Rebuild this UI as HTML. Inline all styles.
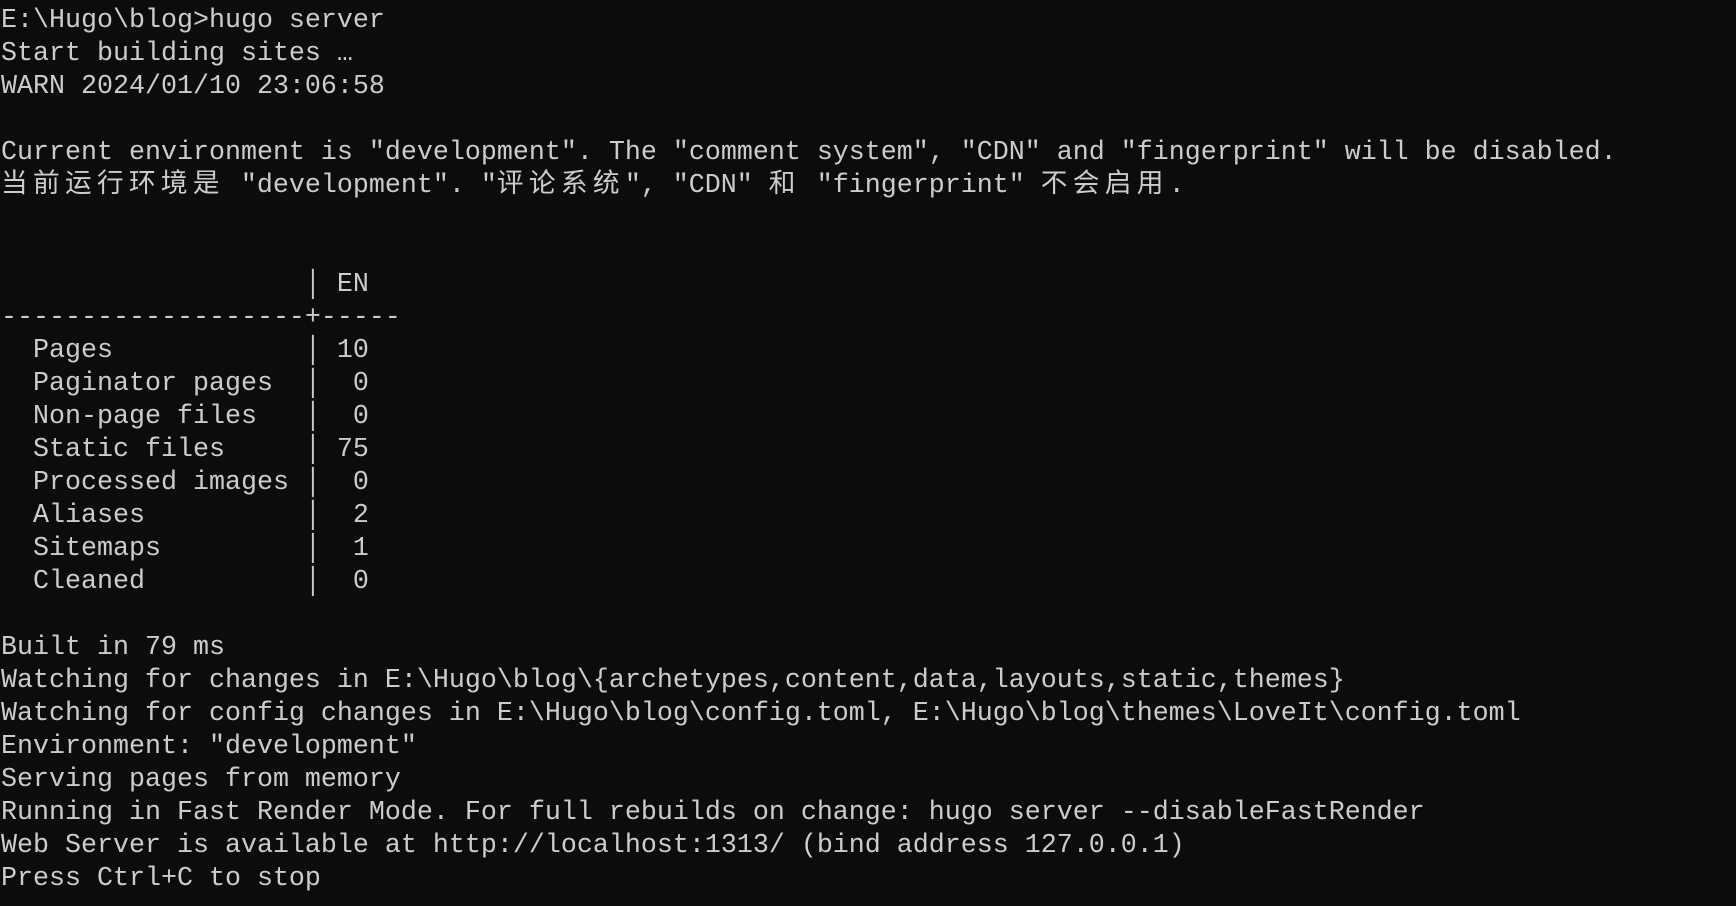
<!DOCTYPE html>
<html><head><meta charset="utf-8"><style>
html,body{margin:0;padding:0;background:#0c0c0c;width:1736px;height:906px;overflow:hidden}
pre{margin:0;padding:5px 0 0 1px;font-family:"Liberation Mono","Noto Sans CJK SC",monospace;font-size:26.67px;line-height:33px;color:#cccccc;white-space:pre}
.c{font-family:"Noto Sans CJK SC",sans-serif;letter-spacing:5.33px;font-size:26.67px;line-height:0}
</style></head><body><pre>E:\Hugo\blog&gt;hugo server
Start building sites …
WARN 2024/01/10 23:06:58

Current environment is ″development″. The ″comment system″, ″CDN″ and ″fingerprint″ will be disabled.
<span class="c">当前运行环境是</span> ″development″. ″<span class="c">评论系统</span>″, ″CDN″ <span class="c">和</span> ″fingerprint″ <span class="c">不会启用</span>.


                   │ EN
-------------------+-----
  Pages            │ 10
  Paginator pages  │  0
  Non-page files   │  0
  Static files     │ 75
  Processed images │  0
  Aliases          │  2
  Sitemaps         │  1
  Cleaned          │  0

Built in 79 ms
Watching for changes in E:\Hugo\blog\{archetypes,content,data,layouts,static,themes}
Watching for config changes in E:\Hugo\blog\config.toml, E:\Hugo\blog\themes\LoveIt\config.toml
Environment: ″development″
Serving pages from memory
Running in Fast Render Mode. For full rebuilds on change: hugo server --disableFastRender
Web Server is available at http://localhost:1313/ (bind address 127.0.0.1)
Press Ctrl+C to stop</pre></body></html>
